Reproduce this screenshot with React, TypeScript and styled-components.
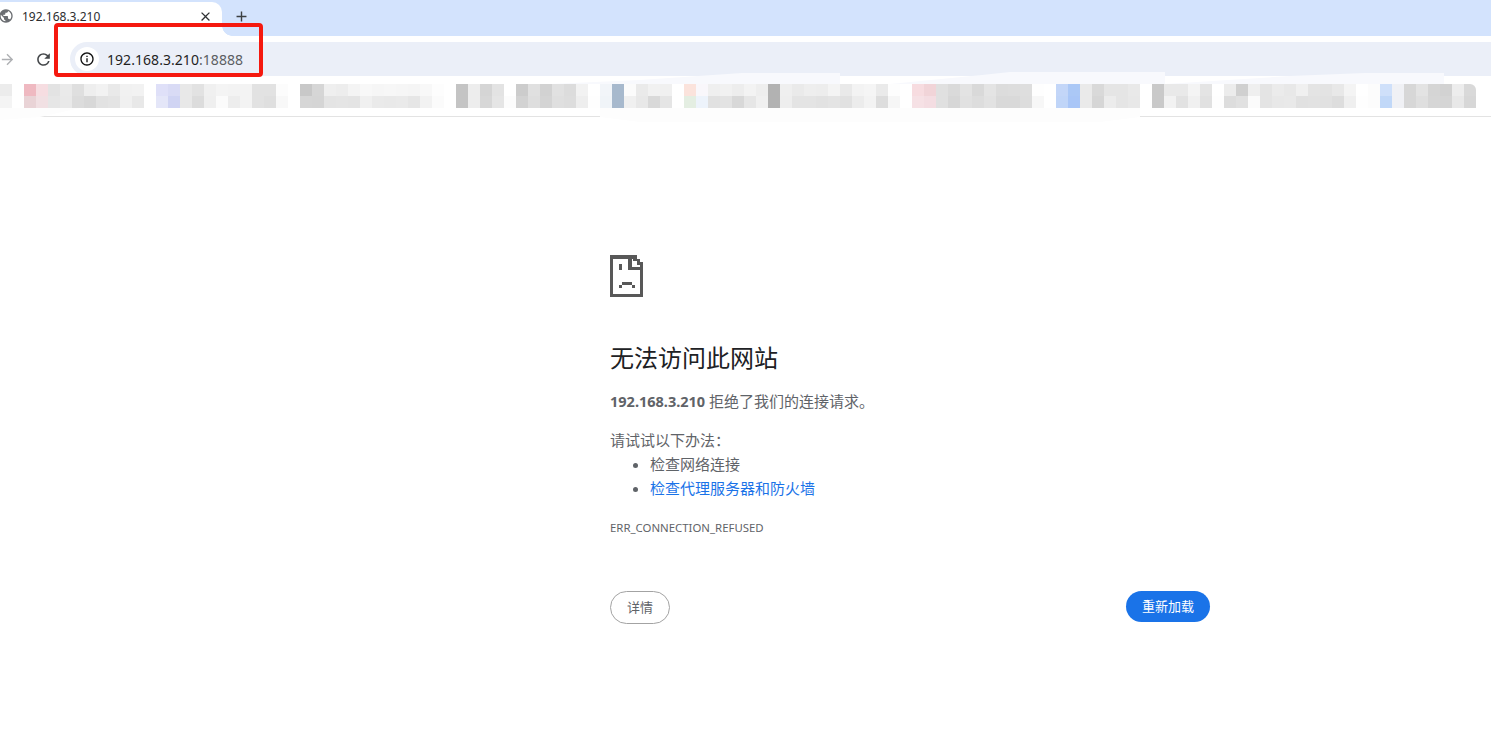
import React from 'react';
import styled, { createGlobalStyle } from 'styled-components';
import { MdAdd, MdArrowForward, MdClose, MdInfoOutline, MdPublic, MdRefresh } from 'react-icons/md';

const UI_FONT = `"Noto Sans", "Noto Sans CJK SC", sans-serif`;

const GlobalStyle = createGlobalStyle`
    html, body {
        margin: 0;
        padding: 0;
        height: 100%;
        background: #fff;
        overflow: hidden;
        font-family: ${UI_FONT};
    }
`

const Window = styled.div`
    position: relative;
    width: 1491px;
    height: 752px;
    overflow: hidden;
    display: flex;
    flex-direction: column;
`

const TabStrip = styled.div`
    height: 36px;
    padding-top: 2px;
    box-sizing: border-box;
    background: #d3e3fd;
    display: flex;
    align-items: stretch;
    flex-shrink: 0;
`

const Tab = styled.div`
    position: relative;
    width: 222px;
    padding-bottom: 6px;
    box-sizing: border-box;
    background: #fff;
    border-radius: 0 10px 0 0;
    display: flex;
    align-items: center;
    color: #444746;
    &::after {
        content: '';
        position: absolute;
        left: 100%;
        bottom: 0;
        width: 10px;
        height: 10px;
        background: radial-gradient(circle at 100% 0, transparent 9.5px, #fff 10px);
    }
`

const Favicon = styled(MdPublic)`
    margin-left: -2px;
    font-size: 16px;
    color: #6b6e72;
    flex-shrink: 0;
`

const TabTitle = styled.div`
    margin-left: 8px;
    flex: 1;
    font-size: 12px;
    color: #2b2c2e;
`

const TabClose = styled(MdClose)`
    font-size: 15px;
    color: #2f3134;
    margin-right: 9px;
`

const NewTab = styled(MdAdd)`
    margin: 0 0 6px 11px;
    align-self: center;
    font-size: 17px;
    color: #3c4043;
`

const Toolbar = styled.div`
    height: 40px;
    padding-top: 6px;
    box-sizing: border-box;
    background: #fff;
    display: flex;
    align-items: stretch;
    flex-shrink: 0;
`

const NavIcons = styled.div`
    width: 70px;
    display: flex;
    align-items: center;
    padding-left: 0;
    box-sizing: border-box;
`

const ForwardIcon = styled(MdArrowForward)`
    font-size: 17px;
    color: #aeb0b3;
    margin-left: -1px;
`

const ReloadIcon = styled(MdRefresh)`
    font-size: 19px;
    color: #44474a;
    margin-left: 18px;
`

const Omnibox = styled.div`
    flex: 1;
    margin-right: -20px;
    background: #ebeff8;
    border-radius: 17px;
    display: flex;
    align-items: center;
    padding-left: 5px;
`

const SiteChip = styled.div`
    width: 24px;
    height: 24px;
    border-radius: 50%;
    background: #fff;
    display: flex;
    align-items: center;
    justify-content: center;
    font-size: 16px;
    color: #111;
`

const Url = styled.div`
    margin-left: 8px;
    font-size: 14px;
    color: #1f1f1f;
    letter-spacing: 0.05px;
    span {
        color: #5b5e62;
    }
`

const BookmarkBar = styled.div`
    height: 41px;
    padding-top: 8px;
    box-sizing: border-box;
    border-bottom: 1px solid #e3e3e3;
    flex-shrink: 0;
`

const Mosaic = styled.div`
    display: grid;
    width: fit-content;
    overflow: hidden;
    border-top-right-radius: 6px;
    grid-template-columns: repeat(123, 12px);
    grid-template-rows: 12px 12px;
    grid-auto-flow: column;
`

const Smudge = styled.svg`
    position: absolute;
    left: 0;
    top: 0;
    pointer-events: none;
`

const Highlight = styled.div`
    position: absolute;
    left: 54px;
    top: 23px;
    width: 209px;
    height: 54px;
    box-sizing: border-box;
    border: 4px solid #f5190f;
    border-radius: 4px;
`

const Page = styled.main`
    flex: 1;
    padding: 138px 0 0 610px;
`

const Content = styled.div`
    width: 600px;
    font-size: 15px;
    color: #5f6368;
`

const SadPage = styled.svg`
    display: block;
    width: 33px;
    height: 42px;
    color: #585858;
`

const Heading = styled.h1`
    margin: 43px 0 0;
    font-size: 24px;
    font-weight: 400;
    line-height: 36px;
    color: #202124;
`

const Summary = styled.p`
    margin: 13px 0 0;
    font-size: 15px;
    line-height: 24px;
    b {
        font-weight: 700;
        font-size: 14.5px;
    }
`

const Suggest = styled.p`
    margin: 15px 0 0;
    font-size: 15px;
    line-height: 24px;
`

const SuggestList = styled.ul`
    margin: 0;
    padding: 0 0 0 40px;
    font-size: 15px;
    line-height: 24px;
`

const SuggestLink = styled.a`
    color: #1a73e8;
    text-decoration: none;
`

const ErrorCode = styled.div`
    margin-top: 20px;
    font-size: 11.4px;
    line-height: 16px;
    text-transform: uppercase;
    color: #5f6368;
`

const Actions = styled.div`
    margin-top: 55px;
    display: flex;
    justify-content: space-between;
    align-items: flex-start;
`

const PillButton = styled.button`
    font-family: ${UI_FONT};
    font-size: 13px;
    border-radius: 17px;
    padding: 0 0 2px;
    box-sizing: border-box;
`

const DetailsButton = styled(PillButton)`
    width: 60px;
    height: 33px;
    background: #fff;
    border: 1px solid #a3a3a3;
    color: #5f6368;
`

const ReloadButton = styled(PillButton)`
    width: 84px;
    height: 31px;
    background: #1a73e8;
    border: none;
    color: #fff;
`

// colour pairs (top/bottom) of the blurred bookmark bar, one column per 12px
const mosaic = `ec/f4 ff/ff efb9c1/e9d3d6 f6dde1/f1e0e3 e3/e6 ea/e9 df/dc ee/d8 f2/e2 e9/e4 f1/f0 f2/e8 ff/ff
dfe0f8/e4e6f8 d9dbf5/d0d4f3 e8/e8 e2/dc f0/ef f4/fb f3/ed f3/f3 e2/e2 e2/df fc/f8 ff/ff c8/d6 d6/d5 ef/e4 ed/e5
f4/e4 f8/f0 f6/ea f7/e9 f6/ea f5/e6 f8/f2 fd/fb ff/ff c4/c4 ed/ed d5/d7 e3/e5 ff/fc cc/d2 e0/de d2/d4 e1/df dc/dd
f2/ee ff/fe f2f5f9/f0f4f8 a7b9cd/a7b9cd fb/f0 ea/e8 f1/d9 f0/e5 ff/ff fbe3dc/e4eee2 f9f7fb/edf3fb ef/e1 f1/e3 ed/d8
f3/e6 ee/f0 b2/b2 ef/ee ea/e4 ee/e4 ed/e2 f4/e4 e9/e1 f3/ec f5/f3 ea/dd fd/f6 ff/ff f7dce0/f6e1e5 f1d4d8/f4dde2
e0/e0 da/d7 e3/e1 d9/dd e4/e2 dc/d9 dd/d9 de/dd fe/f7 ff/ff c3d6f8/c0d5f8 abc8f6/a9c6f7 ea/ea d9/d6 e5/ec e5/e5
e9/e8 ff/ff c9/c9 e9/f2 e9/e2 f4/f0 e4/e1 ff/fe ec/dd d0/e1 ef/fb e4/e4 eb/e8 e8/e9 f0/e1 e4/e2 e3/e1 e8/dd f4/ef
ff/fe fc/fc cfe0fa/c1d8f8 f0f1f5/f0f1f5 d7/d7 e3/df d5/d6 d2/d5 ed/e8 d9/d7`
    .trim()
    .split(/\s+/);

const toHex = (value: string) => (value.length === 2 ? `#${value}${value}${value}` : `#${value}`);

const suggestions = ['检查网络连接'];

export default function App() {
    return (
        <Window>
            <GlobalStyle />
            <TabStrip>
                <Tab>
                    <Favicon />
                    <TabTitle>192.168.3.210</TabTitle>
                    <TabClose />
                </Tab>
                <NewTab />
            </TabStrip>
            <Toolbar>
                <NavIcons>
                    <ForwardIcon />
                    <ReloadIcon />
                </NavIcons>
                <Omnibox>
                    <SiteChip><MdInfoOutline /></SiteChip>
                    <Url>192.168.3.210<span>:18888</span></Url>
                </Omnibox>
            </Toolbar>
            <BookmarkBar>
                <Mosaic>
                    {mosaic.flatMap((pair, col) => pair.split('/').map((value, row) => (
                        <div key={`${col}-${row}`} style={{ background: toHex(value) }} />
                    )))}
                </Mosaic>
            </BookmarkBar>
            <Page>
                <Content>
                    <SadPage viewBox="0 0 99 125" shapeRendering="crispEdges">
                        <path
                            fill="currentColor"
                            fillRule="evenodd"
                            d="M0 0H80V10H90V20H99V125H0V0ZM10 10V115H89V45H55V10H10ZM65 10V35H89V28H80V18H70V10H65Z"
                        />
                        <path fill="currentColor" d="M27 27H37V45H27ZM35 80H65V88H35ZM27 90H35V98H27ZM65 90H75V98H65Z" />
                    </SadPage>
                    <Heading>无法访问此网站</Heading>
                    <Summary><b>192.168.3.210</b> 拒绝了我们的连接请求。</Summary>
                    <Suggest>请试试以下办法：</Suggest>
                    <SuggestList>
                        {suggestions.map(item => <li key={item}>{item}</li>)}
                        <li><SuggestLink href="#">检查代理服务器和防火墙</SuggestLink></li>
                    </SuggestList>
                    <ErrorCode>ERR_CONNECTION_REFUSED</ErrorCode>
                    <Actions>
                        <DetailsButton>详情</DetailsButton>
                        <ReloadButton>重新加载</ReloadButton>
                    </Actions>
                </Content>
            </Page>
            <Smudge width="1491" height="125" viewBox="0 0 1491 125">
                <polygon fill="#f8f9fd" points="550,84 640,80 742,73 840,73 840,84" />
                <polygon fill="#f8f9fd" points="890,84 982,75 1010,72 1165,72 1165,84" />
                <polygon fill="#f8f9fd" points="1165,84 1290,76 1365,73 1444,73 1444,84" />
                <polygon fill="#fff" points="0,76 12,76 24,84 0,84" />
                <polygon fill="#fdfdfd" points="0,108 80,108 40,117 0,120" />
                <polygon fill="#fdfdfd" points="600,108 1140,108 1140,117 1100,122 640,122 600,117" />
            </Smudge>
            <Highlight />
        </Window>
    );
}
